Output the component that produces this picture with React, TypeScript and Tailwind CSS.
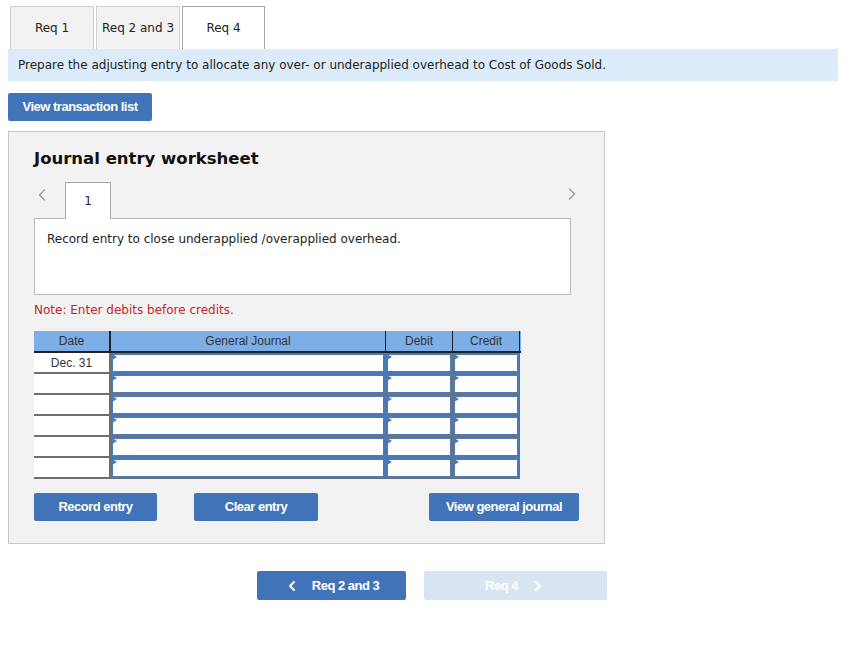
import { ChevronLeft, ChevronRight } from "lucide-react";

const verdana = "font-['DejaVu_Sans',Verdana,sans-serif]";
const arial = "font-['Liberation_Sans',Arial,sans-serif]";

const btn =
  "h-[28px] rounded-[2px] bg-[#4173b8] text-white text-[13px] font-bold tracking-[-0.5px] flex items-center justify-center " +
  arial;

const InputCell = ({ w }: { w: string }) => (
  <div className={`${w} h-[21px] border-r border-b border-[#6f6f6f] relative`}>
    <div className="absolute inset-0 border-2 border-[#4a7ab8] bg-white" />
    <div className="absolute left-[1px] top-[1px] w-0 h-0 border-t-[3px] border-b-[3px] border-l-[5px] border-t-transparent border-b-transparent border-l-[#4a7ab8]" />
  </div>
);

const Row = ({ date }: { date?: string }) => (
  <div className="flex">
    <div
      className={`w-[77px] h-[21px] bg-white border-b-2 border-r-2 border-[#6f6f6f] flex items-center justify-center text-[12px] text-[#333] ${arial}`}
    >
      {date}
    </div>
    <InputCell w="w-[275px]" />
    <InputCell w="w-[67px]" />
    <InputCell w="w-[67px]" />
  </div>
);

const App = () => {
  return (
    <div className={`w-[851px] h-[655px] bg-white relative ${verdana} text-[#222]`}>
      {/* tabs */}
      <div className="flex gap-[2px] pl-[10px] pt-[6px]">
        <div className="w-[84px] h-[43px] bg-[#f2f2f2] border border-[#d0d0d0] border-b-0 flex items-center justify-center text-[12px]">
          Req 1
        </div>
        <div className="w-[84px] h-[43px] bg-[#f2f2f2] border border-[#d0d0d0] border-b-0 flex items-center justify-center text-[12px]">
          Req 2 and 3
        </div>
        <div className="w-[83px] h-[43px] bg-white border border-[#a8a8a8] border-b-0 flex items-center justify-center text-[12px]">
          Req 4
        </div>
      </div>

      {/* instruction */}
      <div className="mx-[8px] w-[830px] h-[32px] bg-[#dcebf9] flex items-center pl-[10px] text-[12px]">
        Prepare the adjusting entry to allocate any over- or underapplied overhead to Cost of Goods Sold.
      </div>

      <div className="px-[8px] pt-[12px]">
        <div className={`${btn} w-[144px]`}>View transaction list</div>
      </div>

      {/* worksheet */}
      <div className="mx-[8px] mt-[10px] w-[597px] h-[413px] bg-[#f2f2f2] border border-[#c8c8c8] px-[25px]">
        <h2 className="pt-[17px] text-[16.5px] font-bold text-[#111] leading-[20px]">Journal entry worksheet</h2>

        <div className="flex items-end mt-[13px] relative">
          <ChevronLeft className="w-[20px] h-[20px] text-[#9a9a9a] absolute left-[-2px] top-[3px]" strokeWidth={1.5} />
          <div className="ml-[31px] w-[46px] h-[37px] bg-white border border-[#a8a8a8] border-b-0 flex items-center justify-center text-[12px] relative z-10 -mb-px">
            1
          </div>
          <ChevronRight className="w-[20px] h-[20px] text-[#9a9a9a] absolute left-[528px] top-[2px]" strokeWidth={1.5} />
        </div>
        <div className="w-[537px] h-[77px] bg-white border border-[#b8b8b8] pl-[12px] pt-[11px] text-[12px]">
          Record entry to close underapplied /overapplied overhead.
        </div>

        <div className="mt-[6px] text-[12px] text-[#c1272d]">Note: Enter debits before credits.</div>

        {/* table */}
        <div className="mt-[12px] w-[487px]">
          <div className={`flex h-[22px] bg-[#7daee6] border-b-2 border-[#222] text-[12px] text-[#333] ${arial}`}>
            <div className="w-[77px] border-r-2 border-[#222] flex items-center justify-center">Date</div>
            <div className="w-[275px] border-r border-[#222] flex items-center justify-center">General Journal</div>
            <div className="w-[67px] border-r border-[#222] flex items-center justify-center">Debit</div>
            <div className="w-[67px] border-r border-[#222] flex items-center justify-center">Credit</div>
          </div>
          <Row date="Dec. 31" />
          <Row />
          <Row />
          <Row />
          <Row />
          <Row />
        </div>

        <div className="flex mt-[14px]">
          <div className={`${btn} w-[123px]`}>Record entry</div>
          <div className={`${btn} w-[124px] ml-[37px]`}>Clear entry</div>
          <div className={`${btn} w-[150px] ml-[111px]`}>View general journal</div>
        </div>
      </div>

      {/* bottom nav */}
      <div className="flex mt-[27px] pl-[257px] gap-[18px]">
        <div className={`${btn} w-[149px] h-[29px] gap-[12px]`}>
          <ChevronLeft className="w-[16px] h-[16px]" strokeWidth={3} />
          <span>Req 2 and 3</span>
        </div>
        <div className={`${btn} w-[183px] h-[29px] gap-[12px] bg-[#d9e4f2]`}>
          <span>Req 4</span>
          <ChevronRight className="w-[16px] h-[16px]" strokeWidth={3} />
        </div>
      </div>
    </div>
  );
};

export default App;
